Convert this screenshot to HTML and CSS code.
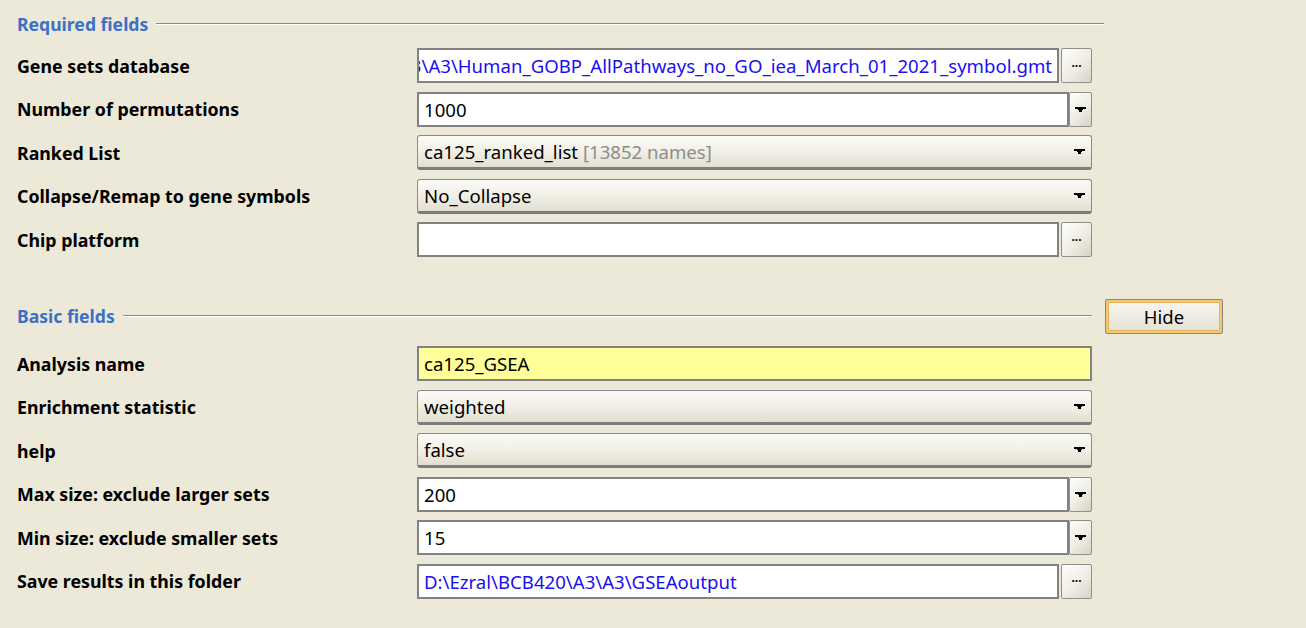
FILE: index.html
```html
<!DOCTYPE html>
<html>
<head>
<meta charset="utf-8">
<link rel="stylesheet" href="styles.css">
</head>
<body>
<div class="panel">
  <div class="section-head head-required">
    <span class="section-title">Required fields</span>
    <span class="rule"></span>
  </div>
  <div class="rows rows-required">
    <div class="row">
      <div class="label">Gene sets database</div>
      <div class="field">
        <div class="text path"><span class="clip-left">3\A3\Human_GOBP_AllPathways_no_GO_iea_March_01_2021_symbol.gmt</span></div>
        <div class="btn-dots"><span class="dots">···</span></div>
      </div>
    </div>
    <div class="row">
      <div class="label">Number of permutations</div>
      <div class="field">
        <div class="text editcombo">1000</div>
        <div class="btn-arrow"><span class="arrow"></span></div>
      </div>
    </div>
    <div class="row">
      <div class="label">Ranked List</div>
      <div class="field">
        <div class="combo">ca125_ranked_list <span class="muted">[13852 names]</span><span class="arrow"></span></div>
      </div>
    </div>
    <div class="row">
      <div class="label">Collapse/Remap to gene symbols</div>
      <div class="field">
        <div class="combo">No_Collapse<span class="arrow"></span></div>
      </div>
    </div>
    <div class="row">
      <div class="label">Chip platform</div>
      <div class="field">
        <div class="text path"></div>
        <div class="btn-dots"><span class="dots">···</span></div>
      </div>
    </div>
  </div>

  <div class="section-head head-basic">
    <span class="section-title">Basic fields</span>
    <span class="rule"></span>
    <button class="hide-btn">Hide</button>
  </div>
  <div class="rows rows-basic">
    <div class="row">
      <div class="label">Analysis name</div>
      <div class="field">
        <div class="text yellow">ca125_GSEA</div>
      </div>
    </div>
    <div class="row">
      <div class="label">Enrichment statistic</div>
      <div class="field">
        <div class="combo">weighted<span class="arrow"></span></div>
      </div>
    </div>
    <div class="row">
      <div class="label">help</div>
      <div class="field">
        <div class="combo">false<span class="arrow"></span></div>
      </div>
    </div>
    <div class="row">
      <div class="label">Max size: exclude larger sets</div>
      <div class="field">
        <div class="text editcombo">200</div>
        <div class="btn-arrow"><span class="arrow"></span></div>
      </div>
    </div>
    <div class="row">
      <div class="label">Min size: exclude smaller sets</div>
      <div class="field">
        <div class="text editcombo">15</div>
        <div class="btn-arrow"><span class="arrow"></span></div>
      </div>
    </div>
    <div class="row">
      <div class="label">Save results in this folder</div>
      <div class="field">
        <div class="text path">D:\Ezral\BCB420\A3\A3\GSEAoutput</div>
        <div class="btn-dots"><span class="dots">···</span></div>
      </div>
    </div>
  </div>
</div>
</body>
</html>
```

FILE: styles.css
```css
html, body {
  margin: 0;
  padding: 0;
  background: #ece9d8;
  font-family: "Noto Sans", "DejaVu Sans", sans-serif;
  overflow: hidden;
}

.panel {
  padding: 0 0 0 17px;
  width: 1210px;
}

.section-head {
  display: flex;
  align-items: center;
  height: 34px;
}

.head-required {
  margin-top: 7px;
  width: 1087px;
}

.head-basic {
  margin-top: 42px;
  width: 1206px;
}

.section-title {
  color: #3c70c6;
  font-weight: bold;
  font-size: 17.6px;
  white-space: nowrap;
  padding-right: 8px;
}

.rule {
  flex: 1;
  height: 0;
  border-top: 1px solid #8b8a85;
  border-bottom: 1px solid #ffffff;
}

.hide-btn {
  margin-left: 13px;
  width: 118px;
  height: 35px;
  box-sizing: border-box;
  border: 1px solid #8a8a80;
  border-radius: 2px;
  box-shadow: inset 0 0 0 2px #f3c874, inset 0 0 0 3px #e9b560;
  background: linear-gradient(#f8f7f1, #e3e0d2);
  font-family: "Noto Sans", "DejaVu Sans", sans-serif;
  font-size: 18.5px;
  color: #000;
  padding: 0;
}

.rows {
  display: flex;
  flex-direction: column;
  gap: 8.5px;
}

.rows-required {
  margin-top: 7px;
}

.rows-basic {
  margin-top: 13px;
}

.row {
  display: grid;
  grid-template-columns: 400px 675px;
  align-items: center;
  height: 35px;
}

.label {
  font-weight: bold;
  font-size: 17.8px;
  color: #000;
  white-space: nowrap;
}

.field {
  display: flex;
  height: 35px;
}

.text {
  flex: 1;
  box-sizing: border-box;
  height: 35px;
  border: 2px solid #828282;
  background: #fff;
  font-size: 18.6px;
  line-height: 31px;
  padding: 0 5px;
  color: #000;
  white-space: nowrap;
  overflow: hidden;
}

.text.path {
  color: #1a10f0;
  direction: rtl;
  text-align: left;
}

.clip-left {
  direction: ltr;
  unicode-bidi: embed;
}

.text.yellow {
  background: #ffff99;
}

.btn-dots, .btn-arrow {
  box-sizing: border-box;
  height: 35px;
  border: 1px solid #8f8f8f;
  border-radius: 2px;
  background: linear-gradient(135deg, #fdfdfb 0%, #efede4 55%, #d6d3c4 100%);
  display: flex;
  align-items: center;
  justify-content: center;
}

.btn-dots {
  width: 31px;
  margin-left: 2px;
}

.btn-arrow {
  width: 23px;
}

.dots {
  font-size: 12px;
  font-weight: bold;
  color: #000;
  line-height: 1;
}

.arrow {
  display: inline-block;
  width: 11px;
  height: 5px;
  background:
    linear-gradient(#000, #000) 0 0 / 11px 2px no-repeat,
    linear-gradient(#000, #000) 3px 2px / 5px 1px no-repeat,
    linear-gradient(#000, #000) 4px 3px / 3px 2px no-repeat;
}

.combo {
  flex: 1;
  position: relative;
  box-sizing: border-box;
  height: 35px;
  border: 1px solid #8a8a8a;
  border-bottom: 3px solid #7c7c7c;
  border-radius: 3px;
  background: linear-gradient(180deg, #fbfbf8 0%, #f1efe6 50%, #e2dfd1 100%);
  font-size: 18.6px;
  line-height: 31px;
  padding: 0 6px;
  color: #000;
  white-space: nowrap;
}

.combo .arrow {
  position: absolute;
  right: 6px;
  top: 13px;
}

.muted {
  color: #8c8c8c;
}
```
